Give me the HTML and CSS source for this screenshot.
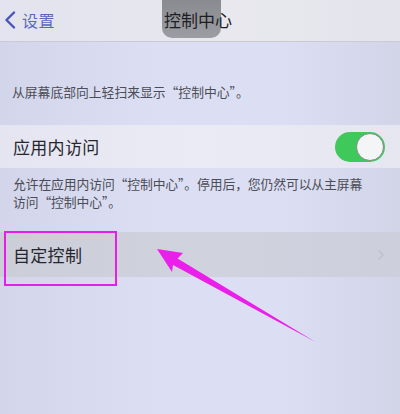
FILE: index.html
```html
<!DOCTYPE html>
<html lang="zh">
<head>
<meta charset="utf-8">
<link rel="stylesheet" href="styles.css">
</head>
<body>
<div class="screen">
  <header class="nav">
    <div class="back">
      <svg class="chev" width="12" height="18" viewBox="0 0 12 18"><path d="M10 1.5 L2.5 9 L10 16.5" fill="none" stroke="#4a55b8" stroke-width="2.4" stroke-linecap="round" stroke-linejoin="round"/></svg>
      <span>设置</span>
    </div>
    <div class="blob"></div>
    <h1 class="title">控制中心</h1>
  </header>

  <p class="note intro">从屏幕底部向上轻扫来显示“控制中心”。</p>

  <div class="row light">
    <span class="label">应用内访问</span>
    <div class="toggle"><div class="knob"></div></div>
  </div>

  <p class="note foot">允许在应用内访问“控制中心”。停用后，您仍然可以从主屏幕<br>访问“控制中心”。</p>

  <div class="row gray">
    <span class="label">自定控制</span>
    <svg class="arrow-right" width="8" height="12" viewBox="0 0 8 12"><path d="M1.5 1.5 L6 6 L1.5 10.5" fill="none" stroke="#bfc1cc" stroke-width="1.6"/></svg>
  </div>

  <div class="highlight"></div>
  <svg class="pointer" width="400" height="414" viewBox="0 0 400 414">
    <path d="M157 249 L183 253 L177.5 258.5 L315.5 342 L173 265 L172 272 Z" fill="#ea1fe9"/>
  </svg>
</div>
</body>
</html>
```
FILE: styles.css
```css
html, body {
  margin: 0;
  padding: 0;
}
body {
  width: 400px;
  height: 414px;
  overflow: hidden;
  font-family: "Noto Sans CJK SC", "Noto Sans", sans-serif;
  background: linear-gradient(90deg, #d3d6ea 0%, #dcdff3 40%, #dcdff3 70%, #d2d5e8 100%);
}
.screen {
  position: relative;
  width: 400px;
  height: 414px;
  display: flex;
  flex-direction: column;
}
.nav {
  position: relative;
  height: 41px;
  flex: none;
  border-bottom: 1px solid #c9cad3;
  background: linear-gradient(90deg, #e2e3ee 0%, #e8e8ee 60%, #e3e4ec 100%);
  display: flex;
  align-items: center;
}
.back {
  display: flex;
  align-items: center;
  gap: 6px;
  padding-left: 4px;
  margin-top: -1px;
  color: #5a67c4;
  font-size: 16px;
  letter-spacing: 0.5px;
}
.chev {
  display: block;
}
.blob {
  position: absolute;
  left: 162px;
  top: 0;
  width: 59px;
  height: 38px;
  border-radius: 0 0 10px 10px;
  background: linear-gradient(180deg, #8a8b91 0%, #9c9da3 100%);
}
.title {
  position: absolute;
  left: 164px;
  top: 9px;
  margin: 0;
  font-size: 17px;
  font-weight: 400;
  line-height: 22px;
  color: #1e1e22;
}
.note {
  margin: 0;
  padding: 0 12px;
  font-size: 12.8px;
  line-height: 18px;
  color: #4b4c55;
  white-space: nowrap;
}
.intro {
  margin-top: 41px;
  margin-bottom: 24px;
}
.foot {
  margin-top: 7px;
  margin-bottom: 21px;
  padding-left: 13px;
  letter-spacing: -0.1px;
}
.row {
  display: flex;
  align-items: center;
  justify-content: space-between;
  padding: 0 15px 0 13px;
  flex: none;
}
.row.light {
  height: 43px;
  background: linear-gradient(90deg, #e4e5f1 0%, #eaebf4 50%, #e5e6f0 100%);
}
.row.gray {
  height: 45px;
  background: linear-gradient(90deg, #cbcdd9 0%, #d0d2de 50%, #cdd0dc 100%);
}
.label {
  font-size: 17px;
  color: #26262c;
  letter-spacing: 0.3px;
}
.toggle {
  width: 50px;
  height: 30px;
  border-radius: 15px;
  background: #3fc95a;
  position: relative;
}
.knob {
  position: absolute;
  right: 1px;
  top: 1px;
  width: 26px;
  height: 26px;
  border-radius: 50%;
  background: #f4f5f7;
  border: 1px solid #7f8a86;
}
.arrow-right {
  display: block;
}
.highlight {
  position: absolute;
  left: 4px;
  top: 231px;
  width: 109px;
  height: 51px;
  border: 2px solid #e81ee8;
}
.pointer {
  position: absolute;
  left: 0;
  top: 0;
}
```
